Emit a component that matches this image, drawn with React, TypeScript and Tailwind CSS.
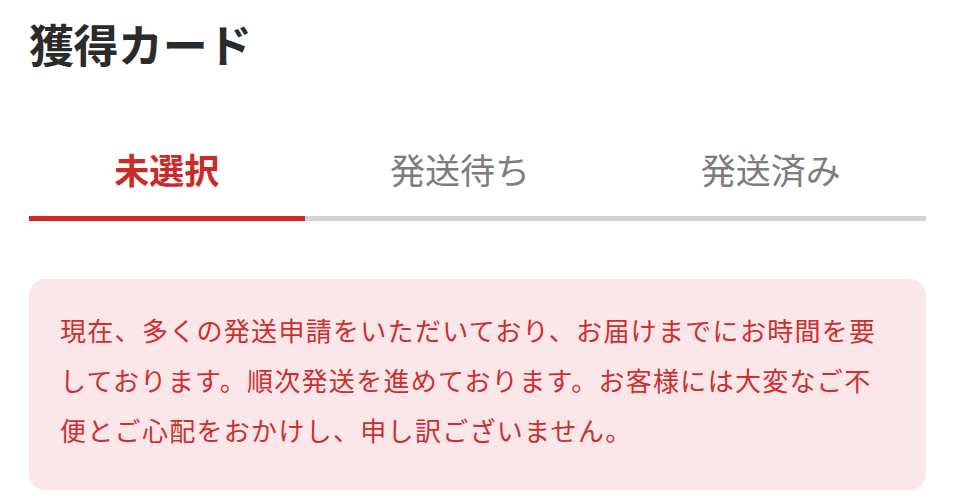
import React from 'react';

const tabs = ['未選択', '発送待ち', '発送済み'];

const App: React.FC = () => {
  const active = 0;
  return (
    <div
      className="min-h-screen bg-white px-[29px] pt-[12px]"
      style={{ fontFamily: '"Noto Sans CJK JP", "Noto Sans", sans-serif' }}
    >
      <h1 className="text-[45px] font-bold leading-[64px] tracking-[-0.01em] text-[#2b2b2b]">獲得カード</h1>

      <div className="mt-[68px] flex">
        {tabs.map((t, i) => (
          <div
            key={t}
            className={
              i === active
                ? 'flex-auto border-b-[5px] border-[#cc2a27] pb-[23px] text-center text-[35px] font-bold leading-[49px] text-[#cc2a27]'
                : 'flex-auto border-b-[5px] border-[#d4d4d4] pb-[23px] text-center text-[35px] leading-[49px] text-[#7d7d7d]'
            }
          >
            {t}
          </div>
        ))}
      </div>

      <div className="mt-[58px] rounded-[16px] bg-[#fbe7e9] pb-[35px] pl-[31px] pr-[31px] pt-[26px]">
        <p className="text-[26px] leading-[50px] tracking-[0.05em] text-[#cc2f2d]">
          現在、多くの発送申請をいただいており、お届けまでにお時間を要しております。順次発送を進めております。お客様には大変なご不便とご心配をおかけし、申し訳ございません。
        </p>
      </div>
    </div>
  );
};

export default App;
